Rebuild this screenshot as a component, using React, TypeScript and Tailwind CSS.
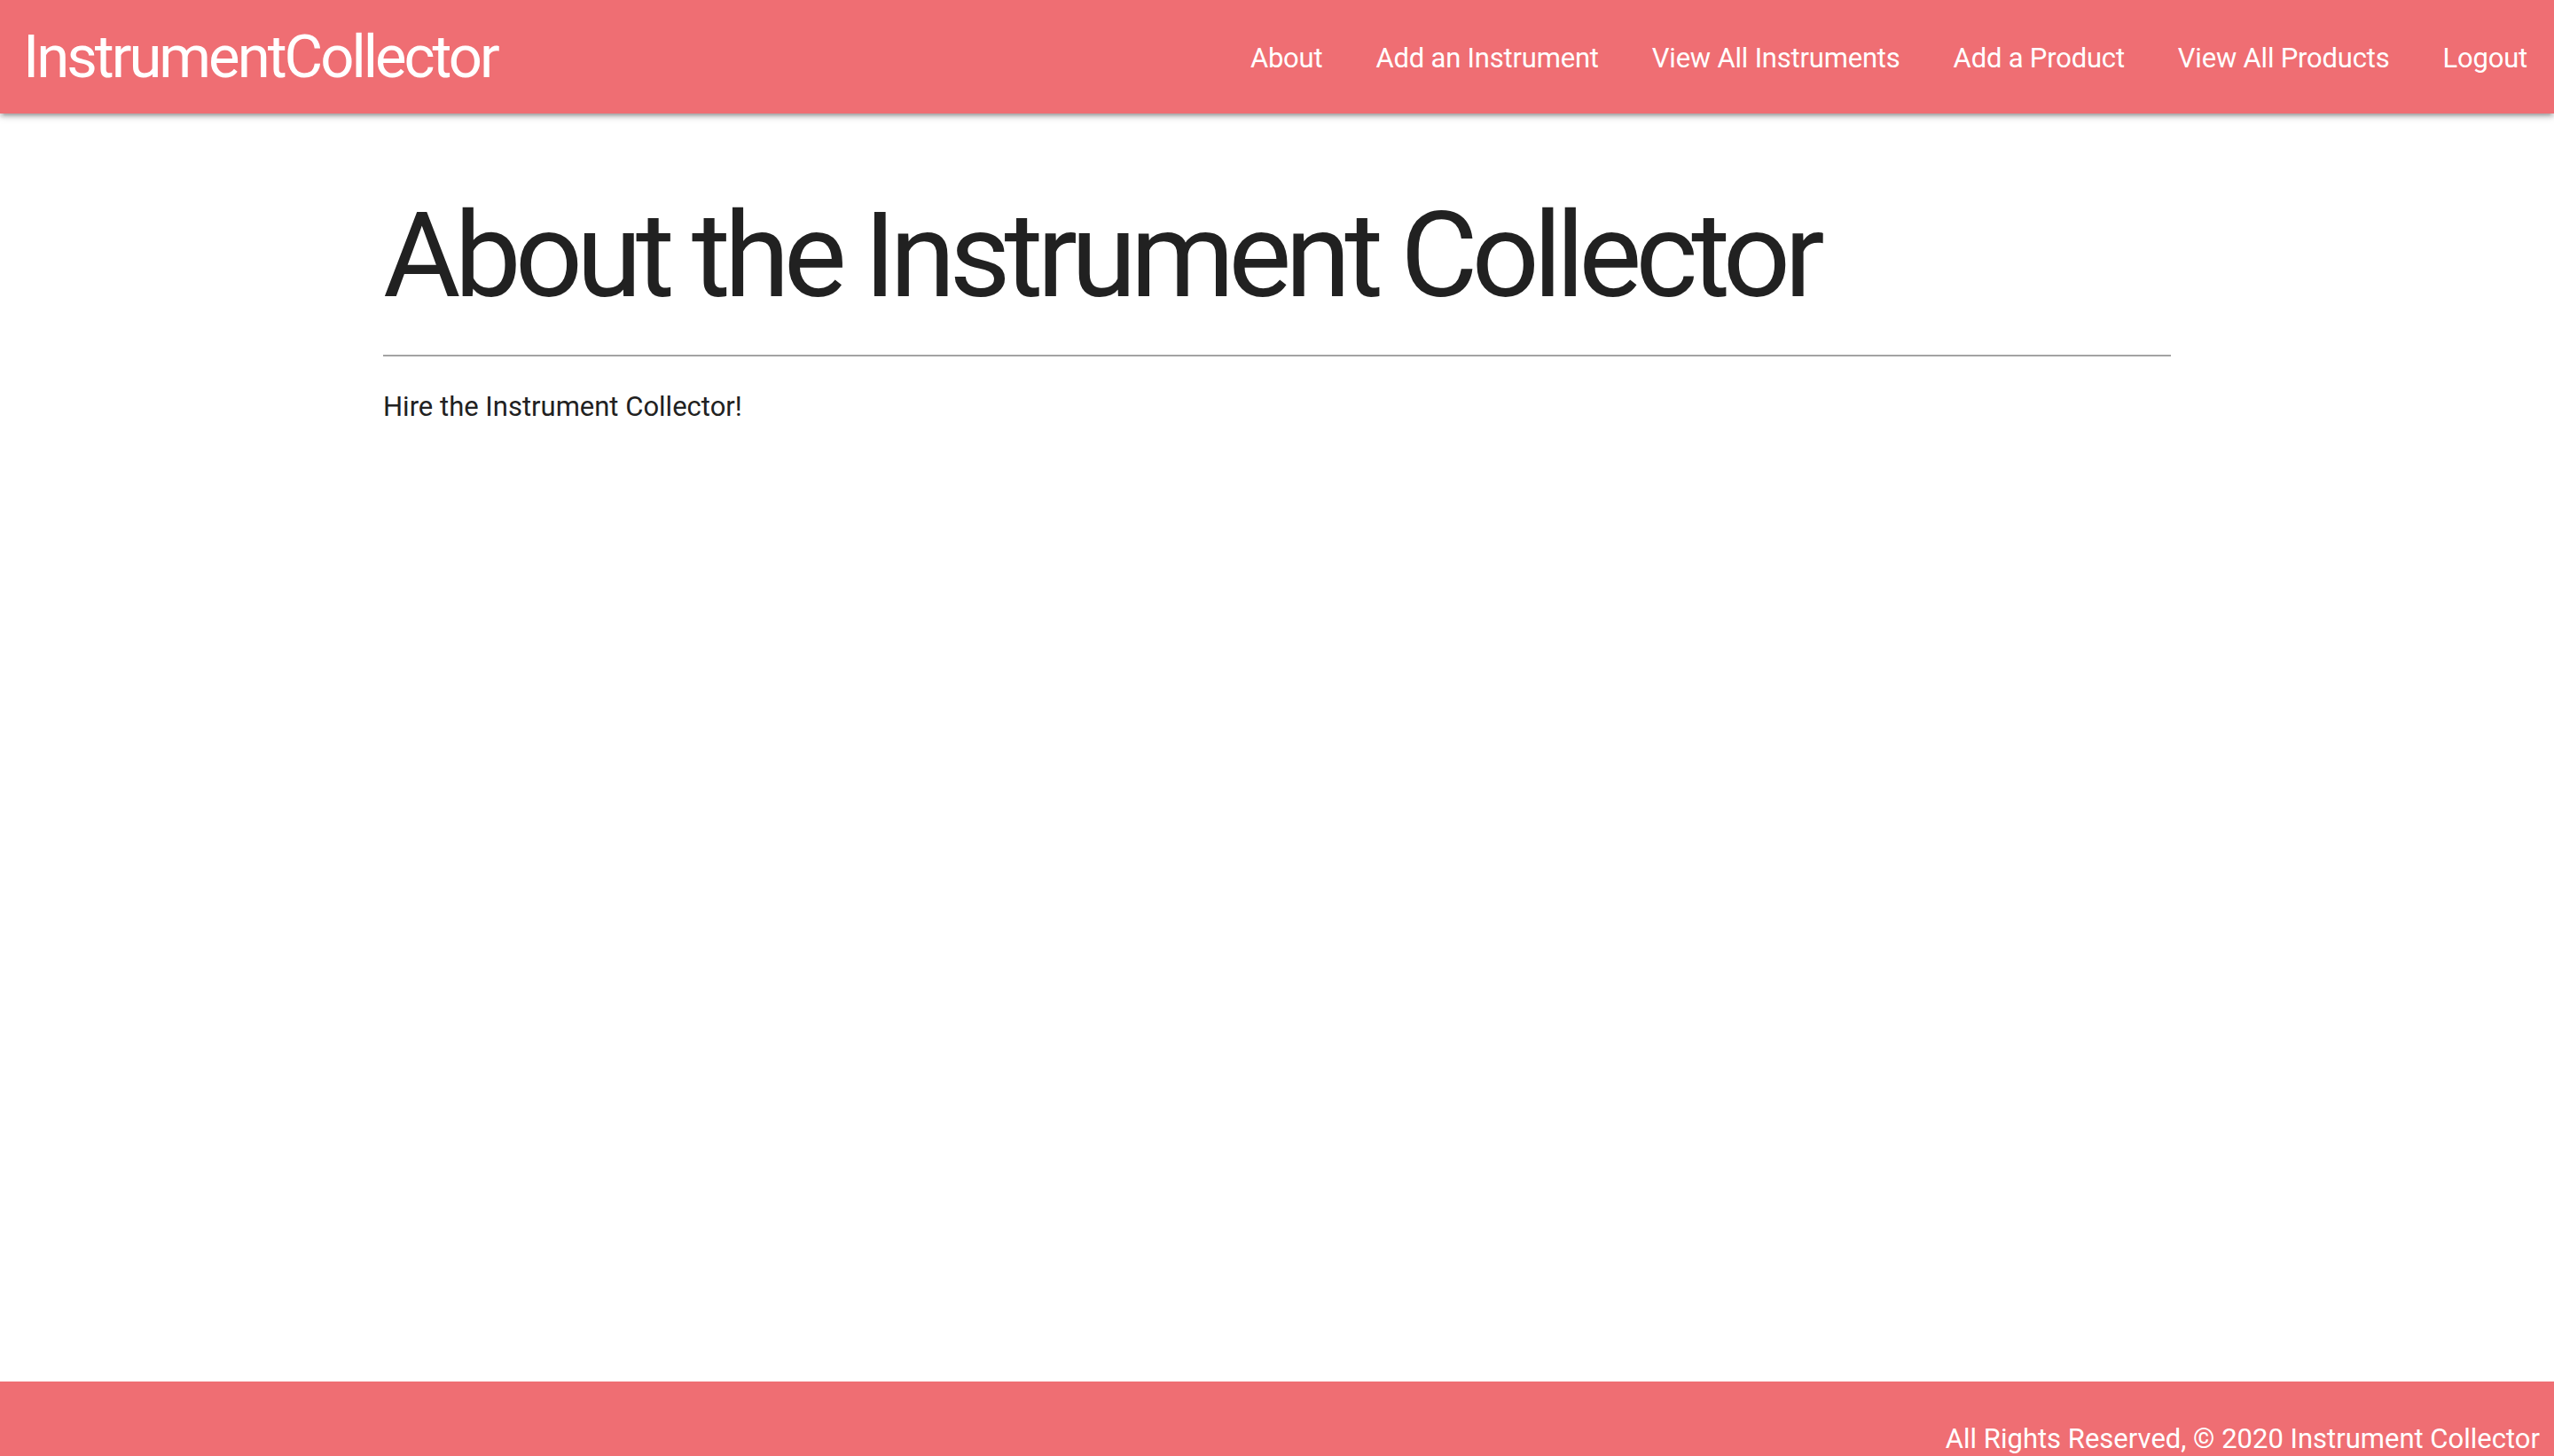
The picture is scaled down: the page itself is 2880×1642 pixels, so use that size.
const links = ["About", "Add an Instrument", "View All Instruments", "Add a Product", "View All Products", "Logout"]

export default function App() {
  return (
    <div className="flex min-h-screen flex-col bg-white font-['Roboto',sans-serif] text-[#212121]">
      <nav className="relative z-10 flex h-[128px] items-center justify-between bg-[#ef6e73] pl-[26px] text-white shadow-[0_4px_4px_0_rgba(0,0,0,0.14),0_6px_2px_-4px_rgba(0,0,0,0.12),0_2px_10px_0_rgba(0,0,0,0.2)]">
        <a className="text-[67px] leading-none tracking-[-3px]">InstrumentCollector</a>
        <ul className="flex h-full items-center pt-[3px]">
          {links.map((l) => (
            <li key={l}>
              <a className="px-[30px] text-[31px] leading-[128px] tracking-[-0.2px]">{l}</a>
            </li>
          ))}
        </ul>
      </nav>

      <main className="mx-auto w-[70%] flex-1">
        <h1 className="mt-[87px] mb-[38px] text-[134px] leading-[1.1] tracking-[-7px]">About the Instrument Collector</h1>
        <hr className="h-[2px] border-0 bg-[#a3a3a3]" />
        <p className="mt-[34px] text-[31px]">Hire the Instrument Collector!</p>
      </main>

      <footer className="h-[84px] overflow-hidden bg-[#ef6e73] pt-[41px] pr-[16px] text-right text-[31px] leading-[48px] text-white">
        All Rights Reserved, © 2020 Instrument Collector
      </footer>
    </div>
  )
}
